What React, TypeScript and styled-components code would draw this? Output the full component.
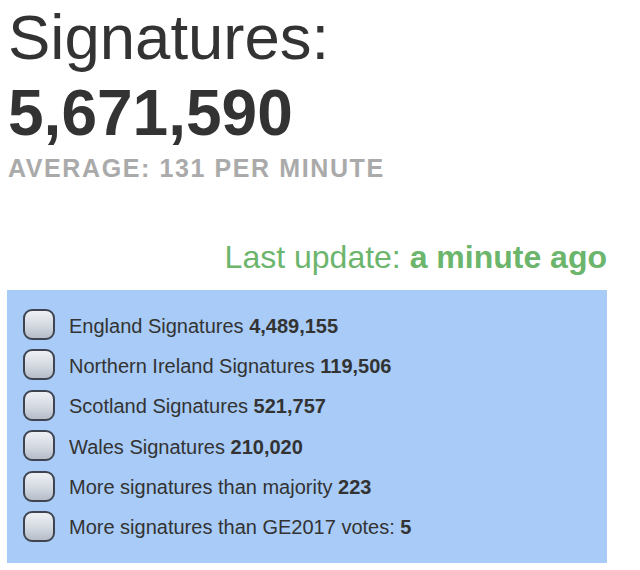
import styled, { createGlobalStyle } from "styled-components";

const GlobalStyle = createGlobalStyle`
  html, body {
    margin: 0;
    padding: 0;
    background: #ffffff;
  }
  body {
    font-family: "Liberation Sans", Arial, Helvetica, sans-serif;
    color: #333333;
  }
`;

const Page = styled.div`
  display: flex;
  flex-direction: column;
  padding: 5px 33px 0 7px;
`;

const Title = styled.h1`
  margin: 0 0 0 1px;
  font-size: 63.5px;
  line-height: 64px;
  font-weight: 400;
  color: #333333;
`;

const Total = styled.div`
  margin: 12px 0 0 1px;
  font-size: 64px;
  line-height: 64px;
  font-weight: 700;
  color: #333333;
`;

const Average = styled.div`
  margin: 11px 0 0 1px;
  font-size: 25px;
  line-height: 24px;
  font-weight: 700;
  letter-spacing: 1.6px;
  color: #aaaaaa;
  text-transform: uppercase;
`;

const Updated = styled.div`
  margin-top: 62px;
  align-self: flex-end;
  font-size: 32px;
  line-height: 30px;
  font-weight: 300;
  color: #6cb56c;

  & > b {
    font-weight: 700;
  }
`;

const Panel = styled.ul`
  list-style: none;
  margin: 18px 0 0;
  padding: 19px 16px 21px;
  background: #a8cbf7;
  display: flex;
  flex-direction: column;
  gap: 9.4px;
`;

const Row = styled.li`
  display: flex;
  align-items: center;
  gap: 14px;
  height: 31px;
  font-size: 20px;
  color: #333333;

  & > span {
    padding-top: 3px;
  }

  & > span > b {
    font-weight: 700;
  }
`;

const Check = styled.span`
  box-sizing: border-box;
  flex: 0 0 auto;
  width: 32px;
  height: 31px;
  border: 2px solid #3e4550;
  border-radius: 9px;
  background: linear-gradient(to bottom, #eef0f4 0%, #d3d8e0 55%, #b6bdc9 100%);
`;

const rows: [string, string][] = [
  ["England Signatures", "4,489,155"],
  ["Northern Ireland Signatures", "119,506"],
  ["Scotland Signatures", "521,757"],
  ["Wales Signatures", "210,020"],
  ["More signatures than majority", "223"],
  ["More signatures than GE2017 votes:", "5"],
];

export default function App() {
  return (
    <Page>
      <GlobalStyle />
      <Title>Signatures:</Title>
      <Total>5,671,590</Total>
      <Average>Average: 131 per minute</Average>
      <Updated>
        Last update: <b>a minute ago</b>
      </Updated>
      <Panel>
        {rows.map(([label, value]) => (
          <Row key={label}>
            <Check />
            <span>
              {label} <b>{value}</b>
            </span>
          </Row>
        ))}
      </Panel>
    </Page>
  );
}
